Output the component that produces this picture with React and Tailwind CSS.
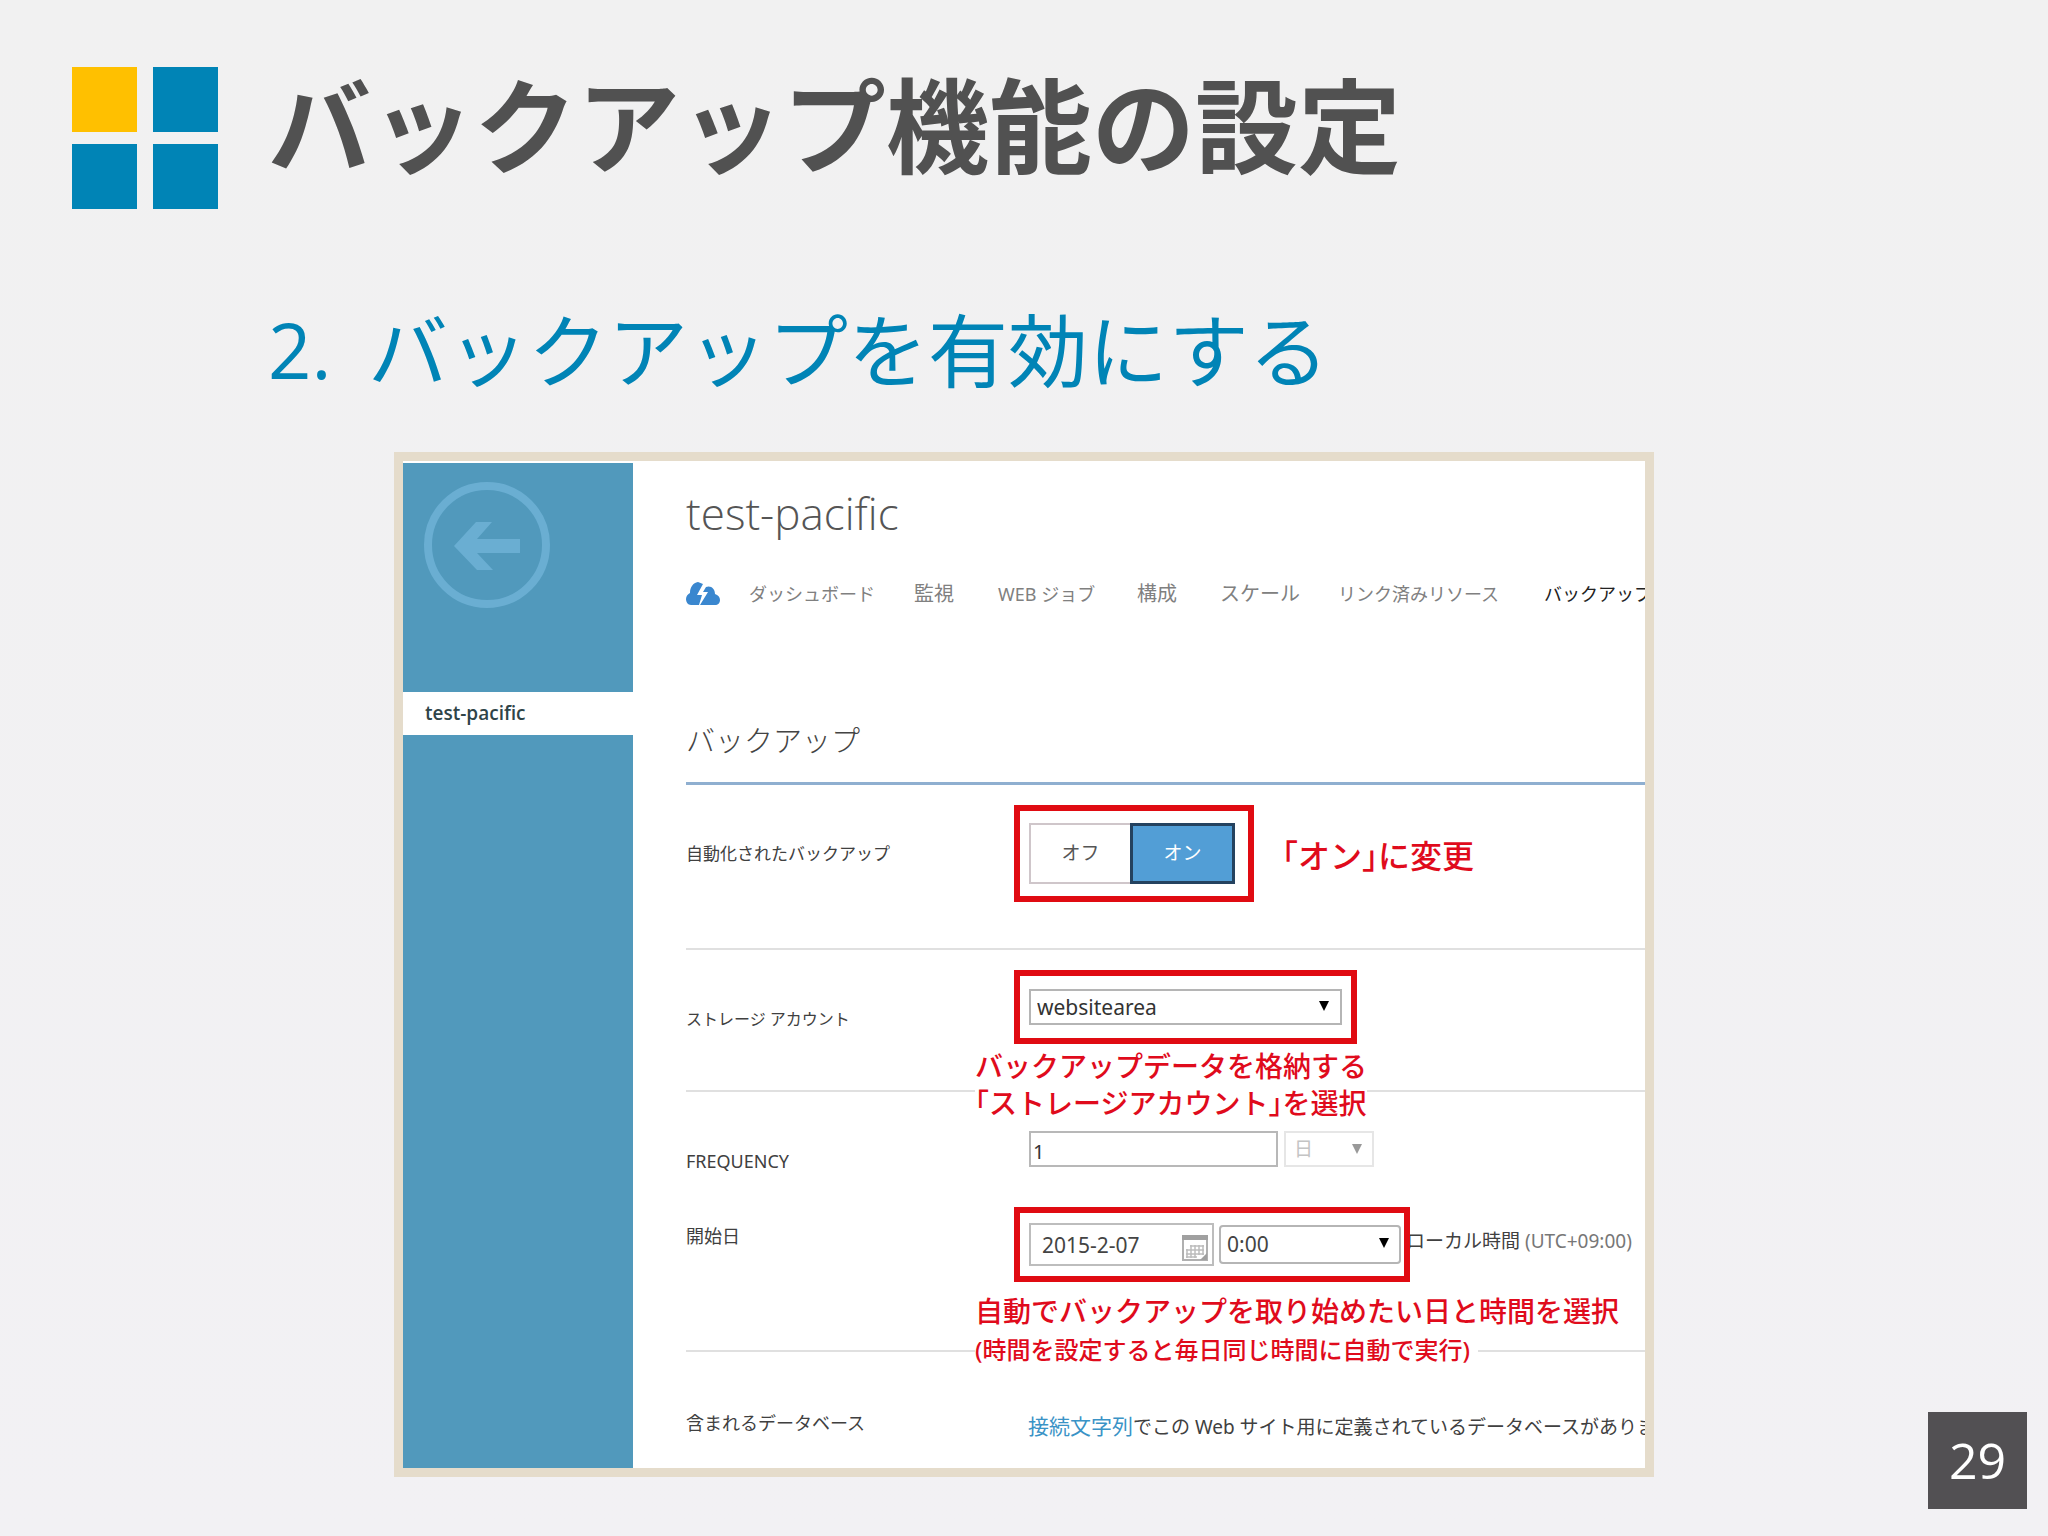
const TABS = [
  { label: 'ダッシュボード', style: 'w-[165px] text-[18px]' },
  { label: '監視', style: 'w-[84px] text-[20px]' },
  { label: 'WEB ジョブ', style: 'w-[139px] text-[18px]' },
  { label: '構成', style: 'w-[83px] text-[20px]' },
  { label: 'スケール', style: 'w-[118px] text-[20px]' },
  { label: 'リンク済みリソース', style: 'w-[206px] text-[18px]' },
];

function Logo() {
  return (
    <div className="grid grid-cols-[65px_65px] grid-rows-[65px_65px] gap-x-4 gap-y-3" aria-hidden="true">
      <span className="bg-[#ffc000]" />
      <span className="bg-[#0084b6]" />
      <span className="bg-[#0084b6]" />
      <span className="bg-[#0084b6]" />
    </div>
  );
}

function BackIcon() {
  return (
    <svg viewBox="0 0 128 128" className="size-32" fill="none" aria-hidden="true">
      <circle cx="64" cy="64" r="59" stroke="#6aaed2" strokeWidth="8" />
      <path d="M31 65 L53 41 H69 L54 58 H97 V72 H54 L70 89 H54 Z" fill="#6aaed2" />
    </svg>
  );
}

function CloudIcon() {
  return (
    <svg viewBox="0 0 34 24" className="h-6 w-[34px]" aria-hidden="true">
      <path d="M5 23 C2 23 0 20 0 17 C0 14 2 12 4 11 C4 5 7 1 12 0 L17 2 L11 13 H16 L13 23 Z" fill="#3a87cf" />
      <path d="M20 5 C25 3 29 7 29 12 C32 13 34 15 34 18 C34 21 32 23 29 23 H14 L22 10 H17 Z" fill="#3a87cf" />
    </svg>
  );
}

function CalendarIcon() {
  return (
    <svg viewBox="0 0 26 26" className="size-[26px]" fill="none" aria-hidden="true">
      <rect x="1" y="1" width="24" height="24" stroke="#b0b0b0" strokeWidth="2" />
      <rect x="0" y="0" width="26" height="5" fill="#a0a0a0" />
      <path d="M8 11 H22 M4 15 H22 M4 19 H22 M4 22 H15 M5 14 V23 M9 10 V23 M13 10 V23 M17 10 V20 M21 10 V20" stroke="#bdbdbd" strokeWidth="1.5" />
      <path d="M18 25 L25 18 V25 Z" fill="#a0a0a0" />
    </svg>
  );
}

function Arrow({ className }) {
  return (
    <svg viewBox="0 0 12 12" className={className} aria-hidden="true">
      <path d="M0 0 H12 L6 12 Z" fill="currentColor" />
    </svg>
  );
}

function Highlight({ children, className }) {
  return <div className={`relative z-10 flex w-fit border-[6px] border-[#e00b12] bg-white ${className}`}>{children}</div>;
}

export default function App() {
  return (
    <div className="flex min-h-screen flex-col bg-linear-to-b from-[#f1f1f1] to-[#f2f1f4] font-['Noto_Sans','Noto_Sans_CJK_JP',sans-serif] text-[#404040]">
      <header className="flex gap-[50px] pt-[67px] pl-[72px]">
        <Logo />
        <h1 className="h-[142px] font-['Noto_Sans_CJK_JP',sans-serif] text-[103px] leading-[110px] font-bold text-[#515151]">
          バックアップ機能の設定
        </h1>
      </header>

      <h2 className="mt-[77px] flex pl-[268px] text-[80px] leading-[120px] text-[#0084b6]">
        <span className="w-[100px] pt-1 font-['Open_Sans',sans-serif] text-[76px]">2.</span>
        <span className="font-['Noto_Sans_CJK_JP',sans-serif]">バックアップを有効にする</span>
      </h2>

      <div className="mt-[42px] flex">
        <div className="flex-1 pl-[21px]" />
        <main className="flex w-full max-w-[1260px] border-[9px] border-[#e5dccb] bg-white">
          <aside className="mt-0.5 flex w-[230px] shrink-0 flex-col bg-[#5199bc]">
            <div className="h-[229px] pt-[18px] pl-5">
              <button type="button" aria-label="戻る" className="block">
                <BackIcon />
              </button>
            </div>
            <a href="#site" className="flex h-[43px] items-center bg-white pl-[22px] font-['Open_Sans',sans-serif] text-[19px] font-semibold text-[#2f4448]">
              test-pacific
            </a>
          </aside>

          <section className="min-w-0 flex-1 overflow-hidden pt-7 pb-[27px] pl-[53px]">
            <h3 className="font-['Open_Sans',sans-serif] text-[44px] leading-[48px] font-light text-[#555]">test-pacific</h3>

            <nav className="mt-[45px] flex h-6 items-center leading-6 whitespace-nowrap text-[#808080]">
              <a href="#start" aria-label="クイック スタート" className="w-[63px] shrink-0">
                <CloudIcon />
              </a>
              {TABS.map((tab) => (
                <a key={tab.label} href="#tab" className={`shrink-0 ${tab.style}`}>
                  {tab.label}
                </a>
              ))}
              <a href="#backup" className="shrink-0 text-[18px] text-[#222]">
                バックアップ
              </a>
            </nav>

            <h4 className="mt-[115px] border-b-[3px] border-[#8fafd0] pb-[21px] text-[29px] leading-10 font-light text-[#444]">バックアップ</h4>

            <div className="grid grid-cols-[328px_1fr] items-center border-b-2 border-[#e0e0e0] pt-5 pb-[46px]">
              <span id="auto" className="text-[17px] leading-6">自動化されたバックアップ</span>
              <div className="flex items-center gap-7">
                <Highlight className="py-3 pr-[13px] pl-[9px]">
                  <div role="group" aria-labelledby="auto" className="flex h-[61px] text-[19px]">
                    <button type="button" className="w-[101px] border-2 border-r-0 border-[#cfc6ca] text-[#555]">
                      オフ
                    </button>
                    <button type="button" className="w-[105px] border-3 border-[#24425f] bg-[#529ed6] text-white">
                      オン
                    </button>
                  </div>
                </Highlight>
                <p className="pt-1 text-[32px] leading-10 font-medium whitespace-nowrap text-[#e00b1c] [font-feature-settings:'halt']">「オン」に変更</p>
              </div>
            </div>

            <div className="grid grid-cols-[328px_1fr] items-start border-b-2 border-[#e0e0e0] pt-5 pb-[46px]">
              <label htmlFor="storage" className="mt-[37px] text-[16px] leading-6">ストレージ アカウント</label>
              <Highlight className="px-[9px] py-[13px]">
                <select id="storage" className="h-9 w-[313px] appearance-none border-2 border-[#b5b5b5] bg-white px-1.5 text-[21px] leading-7 text-[#333]">
                  <option>websitearea</option>
                </select>
                <Arrow className="pointer-events-none absolute top-6 right-[22px] h-3 w-2.5 text-black" />
                <p className="absolute top-[72px] left-[-45px] bg-white text-[28px] leading-[37px] font-medium whitespace-nowrap text-[#e00b1c] [font-feature-settings:'halt']">
                  バックアップデータを格納する
                  <br />
                  「ストレージアカウント」を選択
                </p>
              </Highlight>
            </div>

            <div className="grid grid-cols-[328px_1fr] items-start pt-[39px]">
              <label htmlFor="frequency" className="mt-[18px] text-[18px] leading-6">FREQUENCY</label>
              <div className="flex gap-1.5 pl-[15px]">
                <input id="frequency" defaultValue="1" className="h-9 w-[249px] border-2 border-[#b8b8b8] pt-1 pl-0.5 text-[20px] leading-7 text-[#333]" />
                <div className="relative">
                  <select aria-label="単位" disabled className="h-9 w-[90px] appearance-none border-2 border-[#e6e6e6] bg-white px-2 text-[19px] text-[#c4c4c4] opacity-100">
                    <option>日</option>
                  </select>
                  <Arrow className="pointer-events-none absolute top-3 right-3 h-3 w-2.5 text-[#999]" />
                </div>
              </div>
            </div>

            <div className="grid grid-cols-[328px_1fr] items-start border-b-2 border-[#e0e0e0] pt-[34px] pb-[68px]">
              <label htmlFor="start-date" className="mt-[17px] text-[18px] leading-6">開始日</label>
              <div className="flex items-start">
                <Highlight className="items-center gap-[5px] py-2.5 pr-[3px] pl-[9px]">
                  <div className="relative">
                    <input id="start-date" defaultValue="2015-2-07" className="h-[43px] w-[185px] border-2 border-[#bdbdbd] pl-[11px] text-[21px] leading-7 text-[#444]" />
                    <button type="button" aria-label="カレンダー" className="absolute top-3 right-1.5">
                      <CalendarIcon />
                    </button>
                  </div>
                  <div className="relative">
                    <select aria-label="開始時刻" className="h-[39px] w-[182px] appearance-none rounded-sm border-2 border-[#b5b5b5] bg-white px-1.5 text-[21px] text-[#444]">
                      <option>0:00</option>
                    </select>
                    <Arrow className="pointer-events-none absolute top-3 right-3 h-3 w-2.5 text-black" />
                  </div>
                  <div className="absolute top-[78px] left-[-45px] font-medium whitespace-nowrap text-[#e00b1c]">
                    <p className="text-[28px] leading-[40px]">自動でバックアップを取り始めたい日と時間を選択</p>
                    <p className="w-fit bg-white pr-2 text-[24px] leading-[38px]">(時間を設定すると毎日同じ時間に自動で実行)</p>
                  </div>
                </Highlight>
                <span className="-ml-1 pt-5 text-[19px] leading-7 whitespace-nowrap">
                  ローカル時間 <span className="text-[#777]">(UTC+09:00)</span>
                </span>
              </div>
            </div>

            <div className="grid grid-cols-[328px_1fr] items-start pt-[60px]">
              <span className="text-[18px] leading-[22px]">含まれるデータベース</span>
              <p className="pl-[14px] text-[19px] leading-7 whitespace-nowrap">
                <a href="#connection" className="text-[21px] text-[#3a93c6]">接続文字列</a>でこの Web サイト用に定義されているデータベースがありま
              </p>
            </div>
          </section>
        </main>
        <footer className="flex flex-1 items-end justify-end pr-[21px]">
          <div className="-mb-8 flex h-[97px] w-[99px] items-center justify-center bg-[#525053] font-['Open_Sans',sans-serif] text-[50px] text-white">
            29
          </div>
        </footer>
      </div>
    </div>
  );
}
